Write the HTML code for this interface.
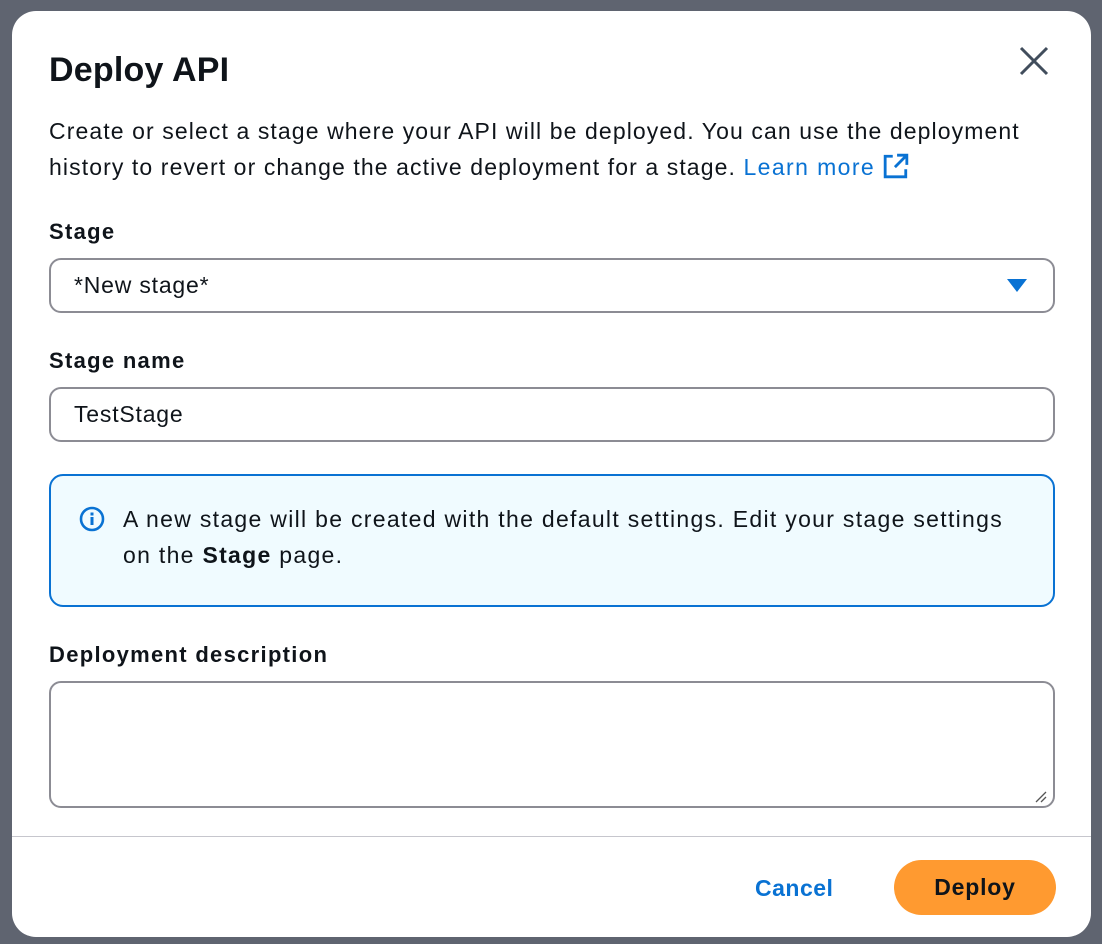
<!DOCTYPE html>
<html><head><style>
*{box-sizing:border-box;margin:0;padding:0}
body{width:1102px;height:944px;background:#5f6470;font-family:"Liberation Sans",sans-serif;color:#0f141a;position:relative;overflow:hidden}
.modal{position:absolute;left:12px;top:11px;width:1079px;height:926px;background:#fff;border-radius:24px}
.abs{position:absolute;white-space:nowrap}
h1{position:absolute;left:37px;top:40px;font-size:34px;font-weight:bold;letter-spacing:0.2px}
.p{left:37px;font-size:23px;line-height:36px;letter-spacing:1.1px}
.lbl{left:37px;font-size:22px;font-weight:bold;letter-spacing:1.3px}
.inp{position:absolute;left:37px;width:1006px;border:2px solid #8c8c94;border-radius:12px;font-size:23px;padding-left:23px;letter-spacing:0.8px}
.info{position:absolute;left:37px;top:463px;width:1006px;height:133px;border:2px solid #0972d3;border-radius:14px;background:#f0fbff}
a{color:#0972d3;text-decoration:none;letter-spacing:1.4px}
</style></head><body>
<div class="modal">
<h1>Deploy API</h1>
<svg class="abs" style="left:1007px;top:35px" width="30" height="30" viewBox="0 0 30 30"><path d="M2 2L28 28M28 2L2 28" stroke="#414d5c" stroke-width="3"/></svg>
<div class="abs p" style="top:102px">Create or select a stage where your API will be deployed. You can use the deployment</div>
<div class="abs p" style="top:138px">history to revert or change the active deployment for a stage. <a>Learn more&nbsp;<svg width="26" height="26" viewBox="0 0 24 24" style="vertical-align:-4px"><path d="M13 2h9v9M22 2L11 13M9 3H2v19h19v-7" fill="none" stroke="#0972d3" stroke-width="2.6"/></svg></a></div>
<div class="abs lbl" style="top:208px">Stage</div>
<div class="inp" style="top:247px;height:55px;line-height:51px">*New stage*</div>
<svg class="abs" style="left:995px;top:268px" width="20" height="14"><path d="M0 0H20L10 13Z" fill="#0972d3"/></svg>
<div class="abs lbl" style="top:337px">Stage name</div>
<div class="inp" style="top:376px;height:55px;line-height:51px">TestStage</div>
<div class="info"></div>
<svg class="abs" style="left:67px;top:495px" width="26" height="26" viewBox="0 0 26 26"><circle cx="13" cy="13" r="11" fill="none" stroke="#0972d3" stroke-width="2.6"/><rect x="11.5" y="11" width="3" height="8" fill="#0972d3"/><rect x="11.5" y="6.5" width="3" height="3" fill="#0972d3"/></svg>
<div class="abs p" style="left:111px;top:490px;letter-spacing:1.3px">A new stage will be created with the default settings. Edit your stage settings</div>
<div class="abs p" style="left:111px;top:526px;letter-spacing:1.3px">on the <b>Stage</b> page.</div>
<div class="abs lbl" style="top:631px">Deployment description</div>
<div class="inp" style="top:670px;height:127px"></div>
<svg class="abs" style="left:1022px;top:779px" width="14" height="14"><path d="M2 12L12 2M7 12L12 7" stroke="#555" stroke-width="1.3"/></svg>
<div style="position:absolute;left:0;top:825px;width:1079px;height:1px;background:#c6c6cd"></div>
<div class="abs" style="left:743px;top:864px;font-size:23px;font-weight:bold;color:#0972d3;letter-spacing:0.5px">Cancel</div>
<div style="position:absolute;left:882px;top:849px;width:162px;height:55px;border-radius:28px;background:#ff9a30;font-size:23px;font-weight:bold;text-align:center;line-height:55px;letter-spacing:0.8px">Deploy</div>
</div>
</body></html>
